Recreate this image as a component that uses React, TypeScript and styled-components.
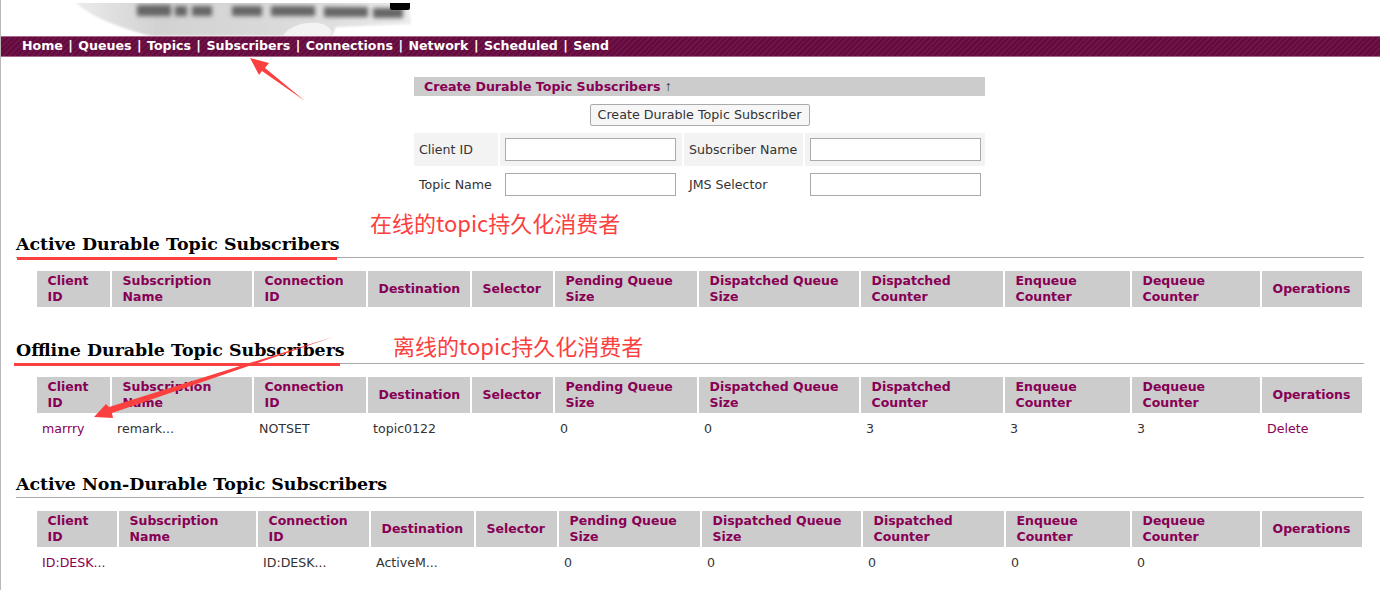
import styled, { createGlobalStyle } from 'styled-components';

const GlobalStyle = createGlobalStyle`
  html, body {
    margin: 0;
    background: #fff;
    overflow: hidden;
  }
`;

const RED = '#fb4040';
const UI_FONT = '"DejaVu Sans", Verdana, sans-serif';

const NAV_ITEMS = ['Home', 'Queues', 'Topics', 'Subscribers', 'Connections', 'Network', 'Scheduled', 'Send'];

const HEADERS: string[] = [
  'Client\nID',
  'Subscription\nName',
  'Connection\nID',
  'Destination',
  'Selector',
  'Pending Queue\nSize',
  'Dispatched Queue\nSize',
  'Dispatched\nCounter',
  'Enqueue\nCounter',
  'Dequeue\nCounter',
  'Operations',
];

const DURABLE_WIDTHS = [73, 140, 112, 102, 81, 142, 160, 142, 125, 128, 100];
const NON_DURABLE_WIDTHS = [80, 137, 111, 103, 81, 141, 159, 141, 124, 128, 100];

const Logo = () => (
  <LogoSvg width="460" height="36" viewBox="0 0 460 36">
    <defs>
      <filter id="soft" x="-10%" y="-50%" width="120%" height="200%">
        <feGaussianBlur stdDeviation="2.2" />
      </filter>
      <filter id="softer" x="-5%" y="-20%" width="110%" height="140%">
        <feGaussianBlur stdDeviation="1.2" />
      </filter>
      <linearGradient id="swoosh" x1="0" y1="0" x2="1" y2="0">
        <stop offset="0" stopColor="#ececec" />
        <stop offset="0.25" stopColor="#d2d2d2" />
        <stop offset="0.7" stopColor="#dcdcdc" />
        <stop offset="1" stopColor="#ececec" />
      </linearGradient>
    </defs>
    <path d="M72 0 H408 L410 24 L335 27 L331 36 H150 C120 28 90 18 72 0 Z" fill="url(#swoosh)" filter="url(#softer)" />
    <path d="M282 36 C286 28 300 21 318 23 C330 26 333 32 328 36 Z" fill="#f3f3f3" />
    <g fill="#666" filter="url(#soft)">
      <rect x="136" y="5" width="34" height="11" />
      <rect x="174" y="6" width="12" height="10" />
      <rect x="191" y="6" width="20" height="10" />
      <rect x="231" y="6" width="30" height="10" />
      <rect x="270" y="6" width="44" height="10" />
      <rect x="323" y="7" width="44" height="10" />
      <rect x="372" y="8" width="30" height="10" />
    </g>
    <rect x="389" y="0" width="20" height="10" rx="2" fill="#050505" />
    <rect x="0" y="0" width="460" height="3" fill="#fff" />
  </LogoSvg>
);

const Annotations = () => (
  <AnnotationSvg width="1390" height="603" viewBox="0 0 1390 603">
    <polygon points="250,58 269,63 265,68 305,101 262,71 259,75" fill={RED} />
    <polygon points="94,417 106,404 109,407 333,337 112,413 113,418" fill={RED} />
    <rect x="17" y="257" width="320" height="3" fill={RED} />
    <rect x="14" y="363" width="326" height="3" fill={RED} />
  </AnnotationSvg>
);

interface SubscriberTableProps {
  widths: number[];
  row?: string[];
}

const SubscriberTable = ({ widths, row }: SubscriberTableProps) => (
  <DataTable>
    <colgroup>
      {widths.map((width, index) => (
        <col key={`col-${index}`} style={{ width }} />
      ))}
    </colgroup>
    <thead>
      <tr>
        {HEADERS.map((header) => (
          <HeaderCell key={header}>{header}</HeaderCell>
        ))}
      </tr>
    </thead>
    {row && (
      <tbody>
        <tr>
          {row.map((value, index) => (
            <DataCell key={`cell-${index}`} $link={index === 0 || value === 'Delete'}>
              {value}
            </DataCell>
          ))}
        </tr>
      </tbody>
    )}
  </DataTable>
);

const App = () => (
  <Page>
    <GlobalStyle />
    <Banner>
      <Logo />
    </Banner>
    <NavBar>
      {NAV_ITEMS.map((item, index) => (
        <span key={item}>
          {index > 0 && <NavDivider>|</NavDivider>}
          <NavLink>{item}</NavLink>
        </span>
      ))}
    </NavBar>

    <CreateForm>
      <colgroup>
        <col style={{ width: 84 }} />
        <col style={{ width: 182 }} />
        <col style={{ width: 119 }} />
        <col style={{ width: 180 }} />
      </colgroup>
      <tbody>
        <tr>
          <FormTitle colSpan={4}>
            Create Durable Topic Subscribers <SortArrow>↑</SortArrow>
          </FormTitle>
        </tr>
        <tr>
          <ButtonCell colSpan={4}>
            <SubmitButton type="button">Create Durable Topic Subscriber</SubmitButton>
          </ButtonCell>
        </tr>
        <tr>
          <FormCell $shaded>Client ID</FormCell>
          <FormCell $shaded>
            <TextInput />
          </FormCell>
          <FormCell $shaded>Subscriber Name</FormCell>
          <FormCell $shaded>
            <TextInput />
          </FormCell>
        </tr>
        <tr>
          <FormCell>Topic Name</FormCell>
          <FormCell>
            <TextInput />
          </FormCell>
          <FormCell>JMS Selector</FormCell>
          <FormCell>
            <TextInput />
          </FormCell>
        </tr>
      </tbody>
    </CreateForm>

    <Section $top={28}>
      <SectionTitle>Active Durable Topic Subscribers</SectionTitle>
      <SubscriberTable widths={DURABLE_WIDTHS} />
    </Section>

    <Section $top={28}>
      <SectionTitle>Offline Durable Topic Subscribers</SectionTitle>
      <SubscriberTable
        widths={DURABLE_WIDTHS}
        row={['marrry', 'remark...', 'NOTSET', 'topic0122', '', '0', '0', '3', '3', '3', 'Delete']}
      />
    </Section>

    <Section $top={28}>
      <SectionTitle>Active Non-Durable Topic Subscribers</SectionTitle>
      <SubscriberTable
        widths={NON_DURABLE_WIDTHS}
        row={['ID:DESK...', '', 'ID:DESK...', 'ActiveM...', '', '0', '0', '0', '0', '0', '']}
      />
    </Section>

    <Annotations />
    <Note $left={370} $top={207}>在线的topic持久化消费者</Note>
    <Note $left={393} $top={330}>离线的topic持久化消费者</Note>
  </Page>
);

export default App;

const Page = styled.div`
  position: relative;
  box-sizing: border-box;
  width: 1380px;
  height: 590px;
  border-left: 1px solid #b8b8b8;
  font-family: ${UI_FONT};
  font-size: 12.6px;
  color: #333;
`;

const Banner = styled.div`
  height: 36px;
  overflow: hidden;
`;

const LogoSvg = styled.svg`
  display: block;
`;

const NavBar = styled.nav`
  box-sizing: border-box;
  height: 21px;
  padding-left: 21px;
  border-top: 1px solid #a8688a;
  border-bottom: 1px solid #a8688a;
  background: repeating-linear-gradient(135deg, #650a3e 0 2px, #6e1548 2px 4px);
  color: #fff;
  font-size: 12.6px;
  font-weight: 700;
  line-height: 18px;
  white-space: nowrap;
`;

const NavLink = styled.span`
  color: #fff;
`;

const NavDivider = styled.span`
  margin: 0 5.45px;
`;

const CreateForm = styled.table`
  table-layout: fixed;
  width: 575px;
  margin: 18px 0 0 411px;
  border-collapse: separate;
  border-spacing: 2px;
`;

const FormTitle = styled.th`
  height: 19px;
  padding: 0 0 0 10px;
  background: #ccc;
  color: #880055;
  font-size: 12.6px;
  font-weight: 700;
  line-height: 19px;
  text-align: left;
`;

const SortArrow = styled.span`
  color: #333;
  font-family: "Liberation Sans", sans-serif;
  font-size: 14px;
  font-weight: 400;
  line-height: 0;
`;

const ButtonCell = styled.td`
  height: 33px;
  padding: 0;
  text-align: center;
`;

const SubmitButton = styled.button`
  box-sizing: border-box;
  width: 220px;
  height: 22px;
  padding: 0;
  border: 1px solid #aaa;
  border-radius: 2px;
  background: #f6f6f6;
  color: #333;
  font-family: ${UI_FONT};
  font-size: 12.7px;
`;

const FormCell = styled.td<{ $shaded?: boolean }>`
  height: 33px;
  padding: 0 5px;
  background: ${({ $shaded }) => ($shaded ? '#f3f3f3' : '#fff')};
  white-space: nowrap;
`;

const TextInput = styled.input`
  display: block;
  box-sizing: border-box;
  width: 170.5px;
  height: 23px;
  padding: 0;
  border: 1px solid #aaa;
  background: #fff;
`;

const Section = styled.section<{ $top: number }>`
  margin: ${({ $top }) => $top}px 0 0 15px;
  width: 1348px;
`;

const SectionTitle = styled.h2`
  margin: 0 0 11px;
  padding: 1px 0;
  border-bottom: 1px solid #aaa;
  color: #000;
  font-family: "DejaVu Serif", "Liberation Serif", serif;
  font-size: 17.4px;
  font-weight: 700;
  line-height: 24px;
  white-space: nowrap;
`;

const DataTable = styled.table`
  table-layout: fixed;
  width: 1329px;
  margin-left: 19px;
  border-collapse: separate;
  border-spacing: 2px;
`;

const HeaderCell = styled.th`
  height: 36px;
  padding: 0 0 0 10.5px;
  background: #ccc;
  color: #880055;
  font-size: 12.5px;
  font-weight: 700;
  line-height: 16px;
  text-align: left;
  white-space: pre-line;
`;

const DataCell = styled.td<{ $link: boolean }>`
  height: 26px;
  padding: 0 5px;
  color: ${({ $link }) => ($link ? '#880055' : '#333')};
  white-space: nowrap;
`;

const AnnotationSvg = styled.svg`
  position: absolute;
  top: 0;
  left: -1px;
  pointer-events: none;
`;

const Note = styled.div<{ $left: number; $top: number }>`
  position: absolute;
  left: ${({ $left }) => $left - 1}px;
  top: ${({ $top }) => $top}px;
  color: ${RED};
  font-family: "Noto Sans CJK SC", "Noto Sans", sans-serif;
  font-size: 22px;
  line-height: 30px;
  white-space: nowrap;
`;
